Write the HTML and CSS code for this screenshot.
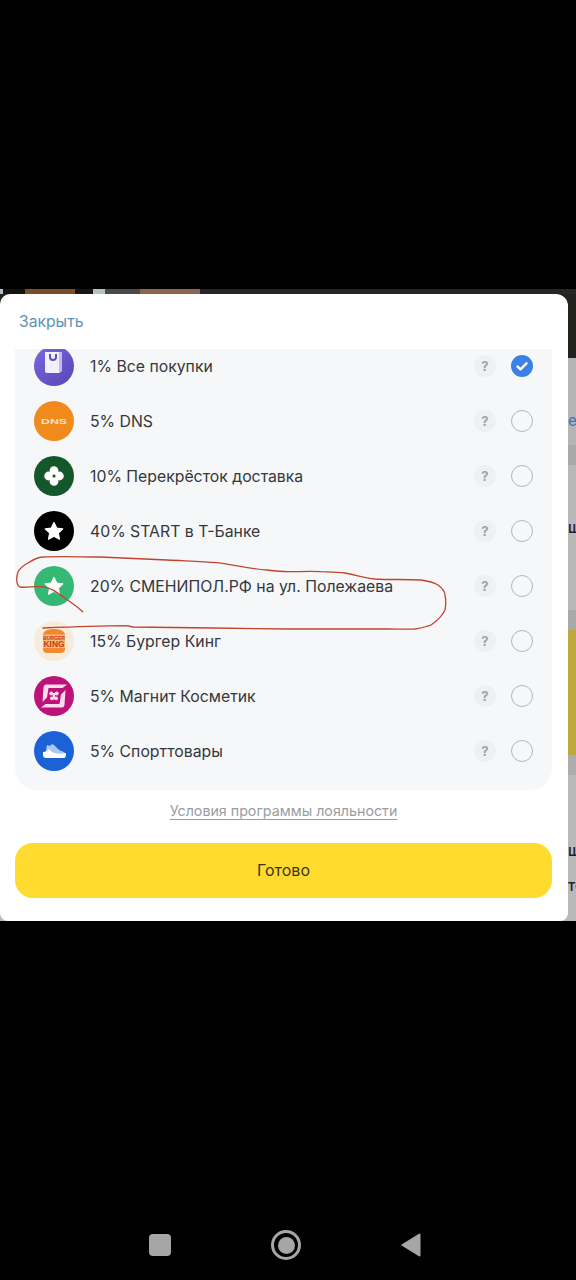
FILE: index.html
```html
<!DOCTYPE html>
<html lang="en">

<head>
  <meta charset="UTF-8">
  <meta name="viewport" content="width=device-width, initial-scale=1.0">
  <title>Программа лояльности</title>
  <link rel="stylesheet" href="styles.css">
</head>

<body>

  <div class="screen">
    <!-- page behind the sheet, only a sliver of it shows -->
    <div class="behind">
      <div class="photo-strip">
        <span class="ph-a"></span><span class="ph-b"></span><span class="ph-c"></span><span class="ph-d"></span><span class="ph-e"></span><span class="ph-f"></span><span class="ph-g"></span><span class="ph-h"></span>
      </div>
      <div class="band band-dark"></div>
      <div class="band band-grey1"><span class="peek peek-blue">ер</span></div>
      <div class="band band-grey2"></div>
      <div class="band band-grey3"><span class="peek">ш</span></div>
      <div class="band band-grey2 band-short"></div>
      <div class="band band-yellow"></div>
      <div class="band band-grey4"></div>
      <div class="band band-grey5">
        <span class="peek">ш</span>
        <span class="peek peek-lower">те</span>
      </div>
    </div>

    <div class="sheet">
      <div class="sheet-head"><a class="close">Закрыть</a></div>

      <div class="panel">
        <div class="list">
          <div class="row">
            <svg class="logo" viewBox="0 0 40 40">
              <defs>
                <linearGradient id="purple" x1="0" y1="0" x2="1" y2="1">
                  <stop offset="0" stop-color="#7c66dc" />
                  <stop offset="1" stop-color="#5747b8" />
                </linearGradient>
              </defs>
              <circle cx="20" cy="20" r="20" fill="url(#purple)" />
              <path d="M11 6h17v19l-3 2H13a2 2 0 0 1-2-2z" fill="#f3effc" />
              <path d="M25 6h3v19l-3 2z" fill="#c5bbea" />
              <path d="M16 8v3a3 3 0 0 0 6 0V8" fill="none" stroke="#5f4dc0" stroke-width="2" />
            </svg>
            <span class="name">1% Все покупки</span>
            <span class="help">?</span>
            <span class="radio radio-on">
              <svg viewBox="0 0 22 22"><path d="M6.5 11.5l3 2.8 6-6" fill="none" stroke="#fff" stroke-width="2.4" stroke-linecap="round" stroke-linejoin="round" /></svg>
            </span>
          </div>

          <div class="row">
            <svg class="logo" viewBox="0 0 40 40">
              <circle cx="20" cy="20" r="20" fill="#f18a1c" />
              <text class="dns" x="7" y="22.8" textLength="26" lengthAdjust="spacingAndGlyphs">DNS</text>
            </svg>
            <span class="name">5% DNS</span>
            <span class="help">?</span>
            <span class="radio"></span>
          </div>

          <div class="row">
            <svg class="logo" viewBox="0 0 40 40">
              <circle cx="20" cy="20" r="20" fill="#14572b" />
              <circle cx="20" cy="14.6" r="4.4" fill="#fff" />
              <circle cx="20" cy="25.4" r="4.4" fill="#fff" />
              <circle cx="14.6" cy="20" r="4.4" fill="#fff" />
              <circle cx="25.4" cy="20" r="4.4" fill="#fff" />
              <circle cx="20" cy="20" r="1.5" fill="#14572b" />
            </svg>
            <span class="name">10% Перекрёсток доставка</span>
            <span class="help">?</span>
            <span class="radio"></span>
          </div>

          <div class="row">
            <svg class="logo" viewBox="0 0 40 40">
              <circle cx="20" cy="20" r="20" fill="#000" />
              <path class="star" d="M20 11.5l2.7 5.6 6.1.8-4.5 4.2 1.2 6.1-5.5-3-5.5 3 1.2-6.1-4.5-4.2 6.1-.8z" />
            </svg>
            <span class="name">40% START в Т-Банке</span>
            <span class="help">?</span>
            <span class="radio"></span>
          </div>

          <div class="row">
            <svg class="logo" viewBox="0 0 40 40">
              <circle cx="20" cy="20" r="20" fill="#35b873" />
              <path class="star" d="M20 11.5l2.7 5.6 6.1.8-4.5 4.2 1.2 6.1-5.5-3-5.5 3 1.2-6.1-4.5-4.2 6.1-.8z" />
            </svg>
            <span class="name">20% СМЕНИПОЛ.РФ на ул. Полежаева</span>
            <span class="help">?</span>
            <span class="radio"></span>
          </div>

          <div class="row">
            <svg class="logo" viewBox="0 0 40 40">
              <circle cx="20" cy="20" r="20" fill="#f8ebdb" />
              <path d="M9 14c0-4 5-6 11-6s11 2 11 6v14c0 3-2 4-5 4H14c-3 0-5-1-5-4z" fill="#f08a2e" />
              <rect x="9" y="13.5" width="22" height="13.5" fill="#f7b878" />
              <text class="bk bk-top" x="9" y="18.8" textLength="22" lengthAdjust="spacingAndGlyphs">BURGER</text>
              <text class="bk" x="9.5" y="26.4" textLength="21" lengthAdjust="spacingAndGlyphs">KING</text>
            </svg>
            <span class="name">15% Бургер Кинг</span>
            <span class="help">?</span>
            <span class="radio"></span>
          </div>

          <div class="row">
            <svg class="logo" viewBox="0 0 40 40">
              <circle cx="20" cy="20" r="20" fill="#bd1279" />
              <path d="M12 8.5H33L28.5 12H14.5L13 21.5 8.5 26 9.5 11Q10 8.5 12 8.5z" fill="#f9dcec" />
              <path d="M28 31.5H7L11.5 28H25.500L27 18.500 31.500 14 30.500 29Q30 31.5 28 31.5z" fill="#f9dcec" />
              <circle cx="17.300" cy="17.600" r="2" fill="#f9dcec" />
              <circle cx="22.700" cy="17.600" r="2" fill="#f9dcec" />
              <circle cx="17.800" cy="22.400" r="1.800" fill="#f9dcec" />
              <circle cx="22.200" cy="22.400" r="1.800" fill="#f9dcec" />
              <rect x="18.900" y="17" width="2.200" height="6.500" fill="#f9dcec" />
            </svg>
            <span class="name">5% Магнит Косметик</span>
            <span class="help">?</span>
            <span class="radio"></span>
          </div>

          <div class="row">
            <svg class="logo" viewBox="0 0 40 40">
              <circle cx="20" cy="20" r="20" fill="#1b62d6" />
              <path d="M13 14c2 1 4 1 5-1l2 1 4 4c2 2 5 2 7 4v2H11z" fill="#a9c8f4" />
              <path d="M9 21c3 0 5-1 6-3l3 3c4 2 9 2 14 1 0 2 0 5-2 5H12c-2 0-3-1-3-3z" fill="#fff" />
            </svg>
            <span class="name">5% Спорттовары</span>
            <span class="help">?</span>
            <span class="radio"></span>
          </div>
        </div>
      </div>

      <a class="terms">Условия программы лояльности</a>
      <button class="done">Готово</button>
    </div>

    <!-- hand drawn marker on top of the screenshot -->
    <svg class="marker" viewBox="0 0 576 640">
      <path d="M82.6 322.7C78 318 72 314 66 310C58 304 52 299 42 297.7C34 297 26 299 20 298C16 296 16 289 18 282.7C21 278 24 276 28 274C33 271 37 268 43 268C62 267 82 268 100 268C125 269 146 270 167 271C186 272 202 272 217 273.7C235 276 250 280 267 281C275 282 281 282.7 288 282.7C300 282.7 310 282 321 282.7C330 283 337 283 345 284C356 286 364 289 375 290C390 291 406 290 421 291C428 292 433 293 438 296C442 299 445 303 445 306C446 311 446 316 445 321C442 327 437 332 431 336C426 338 420 339 415 340C406 340.5 397 340 388 340L288 340L213 339L133 338L127 336.7C100 337 70 338 43 339" />
    </svg>

    <div class="navbar">
      <span class="nav-square"></span>
      <span class="nav-home"><span></span></span>
      <svg class="nav-back" viewBox="0 0 20 24"><path d="M18.5 1.5v21L1.5 12z" fill="#a6a6a6" stroke="#a6a6a6" stroke-width="2" stroke-linejoin="round" /></svg>
    </div>
  </div>

</body>

</html>
```

FILE: styles.css
```css
* {
  box-sizing: border-box;
}

body {
  margin: 0;
  background: #000;
  font-family: Inter, "Noto Sans", sans-serif;
  color: #35373b;
}

.screen {
  position: relative;
  display: flex;
  flex-direction: column;
  width: 576px;
  height: 1280px;
  overflow: hidden;
  padding-top: 289px;
}

/* page behind */
.behind {
  height: 632px;
  overflow: hidden;
}

.photo-strip {
  display: flex;
  height: 5px;
}

.ph-a { width: 3px; background: #a9c0cc; }
.ph-b { width: 22px; background: #14140f; }
.ph-c { width: 50px; background: #7c4e26; }
.ph-d { width: 18px; background: #17170f; }
.ph-e { width: 12px; background: #b4c2c6; }
.ph-f { width: 35px; background: #4b4a44; }
.ph-g { width: 60px; background: #8a6650; }
.ph-h { flex: 1; background: #262722; }

.band {
  position: relative;
  background: #b7b7b7;
  font-size: 15px;
  line-height: 20px;
  font-weight: 500;
  color: #222;
  white-space: nowrap;
}

.band-dark { height: 64px; background: #22231f; }
.band-grey1 { height: 87px; padding: 53px 0 0 568px; background: #b5b5b5; }
.band-grey2 { height: 20px; background: #a9a9a9; }
.band-grey3 { height: 145px; padding: 53px 0 0 568px; background: #b8b8b8; }
.band-short { height: 20px; }
.band-yellow { height: 125px; background: #bfa93e; }
.band-grey4 { height: 20px; background: #adadad; }
.band-grey5 { height: 146px; padding: 66px 0 0 568px; background: #b9b9b9; }

.peek {
  display: block;
}

.peek-blue {
  color: #3f74c4;
}

.peek-lower {
  margin-top: 15px;
}

/* bottom sheet */
.sheet {
  position: absolute;
  top: 294px;
  left: 0;
  width: 568px;
  height: 627px;
  display: flex;
  flex-direction: column;
  background: #fff;
  border-radius: 10px 12px 8px 8px;
}

.sheet-head {
  height: 55px;
  padding: 17px 0 0 19px;
}

.close {
  font-size: 15.7px;
  line-height: 20px;
  color: #5b93b5;
}

.panel {
  height: 441px;
  margin: 0 16px 0 15px;
  background: #f6f7f9;
  border-radius: 0 0 22px 22px;
  overflow: hidden;
}

.list {
  margin-top: -10.5px;
}

.row {
  display: flex;
  align-items: center;
  height: 55px;
  padding-left: 19px;
}

.logo {
  flex: none;
  width: 40px;
  height: 40px;
}

.name {
  flex: 1;
  margin-left: 16px;
  font-size: 15.8px;
  white-space: nowrap;
}

.help {
  width: 22px;
  height: 22px;
  border-radius: 50%;
  background: #eff0f2;
  color: #9fa2a7;
  font-size: 13px;
  font-weight: 700;
  line-height: 22px;
  text-align: center;
}

.radio {
  width: 22px;
  height: 22px;
  margin: 0 19.5px 0 14.5px;
  border: 1px solid #b3b5b8;
  border-radius: 50%;
}

.radio-on {
  background: #3b82e6;
  border: 0;
}

.radio-on svg {
  display: block;
}

.star {
  fill: #fff;
  stroke: #fff;
  stroke-width: 1.2;
  stroke-linejoin: round;
}

.dns {
  font-family: "Liberation Sans", sans-serif;
  font-size: 8px;
  font-weight: 700;
  fill: #fbe6cf;
}

.bk {
  font-family: "Liberation Sans", sans-serif;
  font-size: 8.5px;
  font-weight: 700;
  fill: #c8371b;
}

.bk-top {
  font-size: 6px;
}

.terms {
  margin-top: 11px;
  align-self: center;
  margin-left: -1px;
  font-size: 14.25px;
  line-height: 20px;
  color: #9a9da3;
  text-decoration: underline;
  text-underline-offset: 3px;
  text-decoration-thickness: 1px;
}

.done {
  height: 55px;
  margin: 22px 16px 0 15px;
  padding-bottom: 2px;
  border: 0;
  border-radius: 18px;
  background: #fedb2e;
  font-family: inherit;
  font-size: 16px;
  color: #3a3520;
}

/* red marker */
.marker {
  position: absolute;
  top: 289px;
  left: 0;
  width: 576px;
  height: 640px;
  pointer-events: none;
}

.marker path {
  fill: none;
  stroke: #c0452e;
  stroke-width: 1.3;
  stroke-linecap: round;
  stroke-linejoin: round;
}

/* android nav */
.navbar {
  display: flex;
  align-items: center;
  height: 60px;
  margin-top: auto;
  margin-bottom: 5px;
  padding-left: 149px;
}

.nav-square {
  width: 22px;
  height: 22px;
  border-radius: 4px;
  background: #a6a6a6;
}

.nav-home {
  display: flex;
  align-items: center;
  justify-content: center;
  width: 30px;
  height: 30px;
  margin-left: 100px;
  border: 3px solid #a6a6a6;
  border-radius: 50%;
}

.nav-home span {
  width: 17px;
  height: 17px;
  border-radius: 50%;
  background: #a6a6a6;
}

.nav-back {
  width: 20px;
  height: 24px;
  margin-left: 100px;
}
```
